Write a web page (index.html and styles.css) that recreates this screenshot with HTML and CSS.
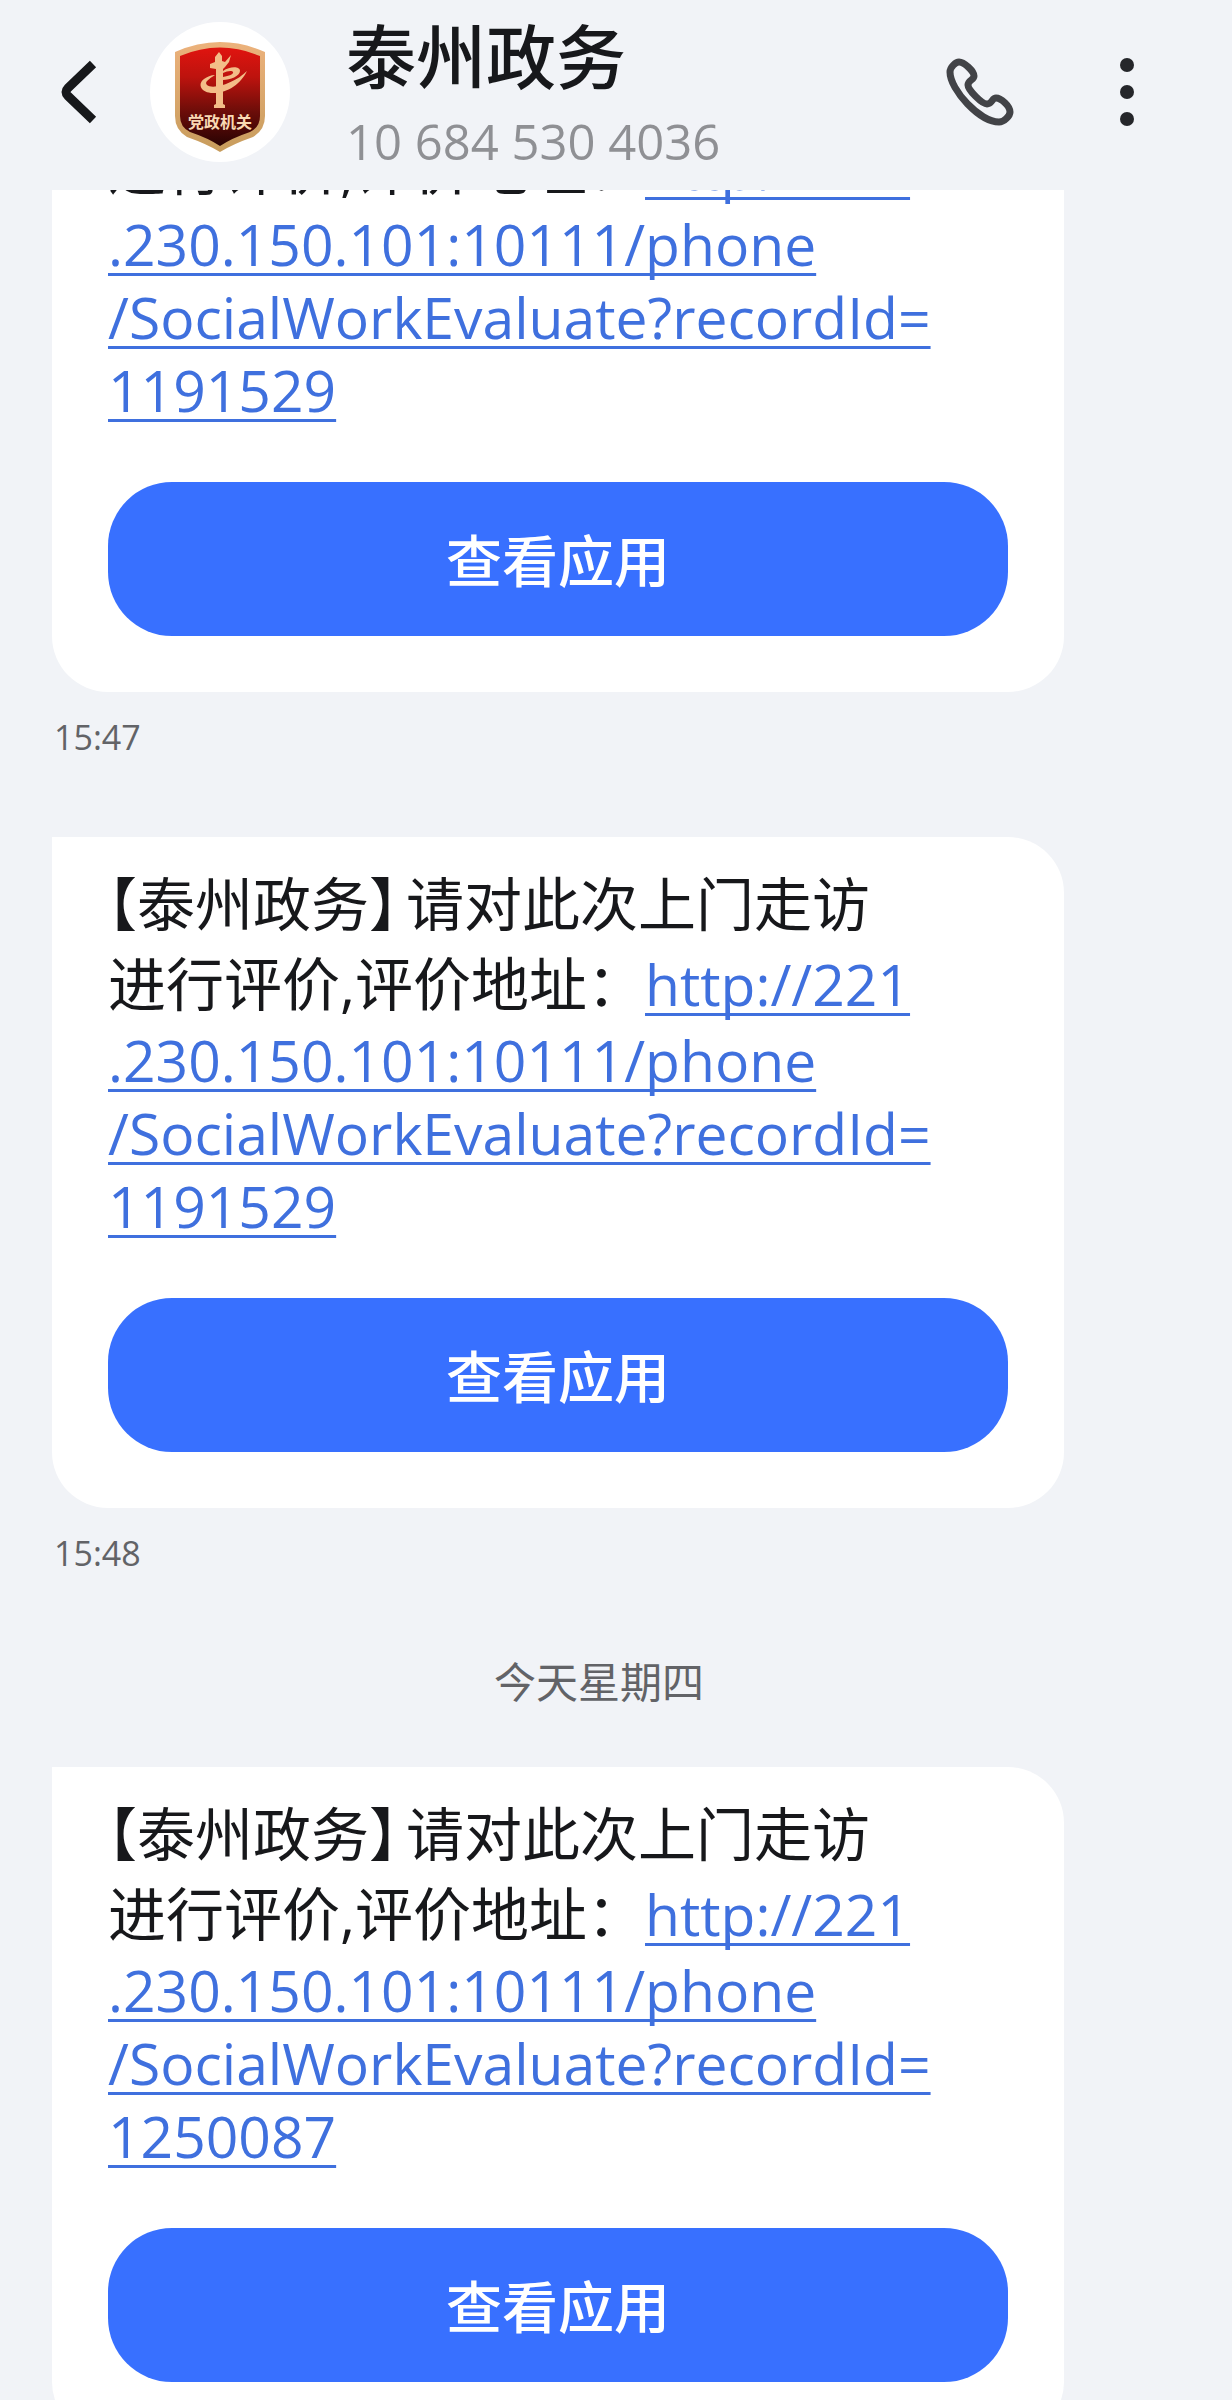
FILE: index.html
```
<!DOCTYPE html>
<html lang="zh-CN">
<head>
    <meta charset="UTF-8">
    <meta name="viewport" content="width=device-width, initial-scale=1.0">
    <title>泰州政务</title>
    <link rel="stylesheet" href="styles.css">
</head>
<body>
    <header class="topbar">
        <button class="icon-btn back-btn" aria-label="返回">
            <svg width="40" height="68" viewBox="0 0 40 68" fill="none" stroke="#17181b" stroke-width="9">
                <path d="M35 6 L10 30 Q6 34 10 38 L35 62"/>
            </svg>
        </button>
        <div class="avatar">
            <svg width="90" height="110" viewBox="0 0 90 110">
                <defs>
                    <linearGradient id="red" x1="0" y1="0" x2="0" y2="1">
                        <stop offset="0" stop-color="#e0140f"/>
                        <stop offset="0.3" stop-color="#bd130e"/>
                        <stop offset="0.65" stop-color="#6c0d09"/>
                        <stop offset="1" stop-color="#280303"/>
                    </linearGradient>
                    <linearGradient id="gold" x1="0" y1="0" x2="0" y2="1">
                        <stop offset="0" stop-color="#ecb27c"/>
                        <stop offset="1" stop-color="#c79c5c"/>
                    </linearGradient>
                </defs>
                <path fill="url(#gold)" d="M0 10 Q45 -10 90 10 V74 Q90 88 78 95 Q58 102 45 110 Q32 102 12 95 Q0 88 0 74 Z"/>
                <path fill="url(#red)" d="M5 14 Q45 -3 85 14 V74 Q85 85 75 90 Q57 96 45 104 Q33 96 15 90 Q5 85 5 74 Z"/>
                <g fill="#f3bd88">
                    <path d="M44 10 L47 14 V19 L50 20 L56 13 L54 20 L50 25 L48 27 V62 L50 63 V66 H39 V63 L41 62 V27 L35 26 V22 L40 20 V15 Z"/>
                    <path d="M72 29 C66 41 54 51 38 51 C26 51 22 42 29 37 C32 35 36 33 40 33 C34 37 29 40 32 43 C38 48 60 41 72 29 Z"/>
                    <path d="M48 29 C55 24 65 24 65 29 C65 34 55 38 48 38 V35 C54 34 59 32 58 30 C57 28 52 29 48 31 Z"/>
                </g>
                <text class="badge-text" x="45" y="86" text-anchor="middle">党政机关</text>
            </svg>
        </div>
        <div class="contact">
            <h1 class="contact-name">泰州政务</h1>
            <div class="contact-number">10 684 530 4036</div>
        </div>
        <button class="icon-btn" aria-label="拨打电话">
            <svg width="68" height="68" viewBox="0 0 68 68" fill="none" stroke="#424347" stroke-width="7" stroke-linejoin="round">
                <path d="M13 4 C10 4 4 9 4 14 C4 32 34 64 53 64 C58 64 64 58 64 54 C64 48 55 40 50 40 C46 40 46 46 41 46 C36 46 22 32 22 27 C22 22 28 22 28 18 C28 13 18 4 13 4 Z"/>
            </svg>
        </button>
        <button class="icon-btn" aria-label="更多">
            <svg width="14" height="68" viewBox="0 0 14 68" fill="#25262a">
                <circle cx="7" cy="7" r="7"/>
                <circle cx="7" cy="34" r="7"/>
                <circle cx="7" cy="61" r="7"/>
            </svg>
        </button>
    </header>

    <main class="chat">
        <div class="message scrolled">
            <div class="bubble">
                <p class="text"><span class="zh"><span class="bracket">【</span>泰州政务<span class="bracket close">】</span>请对此次上门走访<br>进行评价,评价地址：</span><a href="#">http://221<br>.230.150.101:10111/phone<br>/SocialWorkEvaluate?recordId=<br>1191529</a></p>
                <button class="open-btn">查看应用</button>
            </div>
            <time class="time">15:47</time>
        </div>

        <div class="message">
            <div class="bubble">
                <p class="text"><span class="zh"><span class="bracket">【</span>泰州政务<span class="bracket close">】</span>请对此次上门走访<br>进行评价,评价地址：</span><a href="#">http://221<br>.230.150.101:10111/phone<br>/SocialWorkEvaluate?recordId=<br>1191529</a></p>
                <button class="open-btn">查看应用</button>
            </div>
            <time class="time">15:48</time>
        </div>

        <div class="day">今天星期四</div>

        <div class="message">
            <div class="bubble">
                <p class="text"><span class="zh"><span class="bracket">【</span>泰州政务<span class="bracket close">】</span>请对此次上门走访<br>进行评价,评价地址：</span><a href="#">http://221<br>.230.150.101:10111/phone<br>/SocialWorkEvaluate?recordId=<br>1250087</a></p>
                <button class="open-btn">查看应用</button>
            </div>
        </div>
    </main>
</body>
</html>
```
FILE: styles.css
```
* {
    box-sizing: border-box;
}

body {
    margin: 0;
    height: 100vh;
    display: flex;
    flex-direction: column;
    overflow: hidden;
    background: #f1f3f7;
    color: #17181b;
    font-family: "Open Sans", "Noto Sans CJK SC", sans-serif;
}

button {
    border: none;
    font-family: inherit;
    cursor: pointer;
}

/* top bar */
.topbar {
    flex: none;
    display: flex;
    align-items: center;
    height: 190px;
    padding: 0 98px 6px 58px;
}

.icon-btn {
    display: flex;
    padding: 0;
    background: none;
}

.icon-btn + .icon-btn {
    margin-left: 106px;
}

.avatar {
    display: flex;
    align-items: center;
    justify-content: center;
    width: 140px;
    height: 140px;
    margin-left: 52px;
    padding-top: 10px;
    border-radius: 50%;
    background: #fff;
}

.badge-text {
    font-size: 16px;
    font-weight: 700;
    fill: #f9d9b4;
}

.contact {
    flex: 1;
    margin-left: 56px;
    padding-top: 8px;
}

.contact-name {
    margin: 0;
    font-size: 70px;
    font-weight: 500;
    line-height: 90px;
}

.contact-number {
    color: #8f9094;
    font-size: 49px;
    line-height: 78px;
}

/* conversation */
.chat {
    flex: 1;
    min-height: 0;
    overflow: hidden;
    padding: 0 86px 0 52px;
}

.message {
    max-width: 1012px;
    margin-bottom: 77px;
}

/* the oldest message is partly under the top bar */
.message.scrolled {
    margin-top: -169px;
}

.bubble {
    padding: 27px 56px 56px;
    border-radius: 0 56px 56px 56px;
    background: #fff;
}

.text {
    margin: 0 0 55px;
    font-size: 57px;
    line-height: 73px;
    white-space: nowrap;
}

.zh {
    font-size: 58px;
    line-height: 80px;
}

/* half-width lenticular brackets */
.bracket {
    font-feature-settings: "halt";
}

.bracket.close {
    margin-right: 8px;
}

.text a {
    color: #3f70de;
    text-decoration: underline;
    text-decoration-thickness: 3px;
    text-underline-offset: 7px;
    text-decoration-skip-ink: none;
}

.open-btn {
    display: block;
    width: 100%;
    height: 154px;
    padding: 0 0 4px;
    border-radius: 64px;
    background: #3870ff;
    color: #fff;
    font-size: 56px;
    font-weight: 500;
}

.time {
    display: block;
    margin-top: 22px;
    padding-left: 2px;
    color: #626367;
    font-size: 34px;
    line-height: 46px;
}

.day {
    margin-bottom: 56px;
    color: #626367;
    font-size: 42px;
    line-height: 58px;
    text-align: center;
}
```
